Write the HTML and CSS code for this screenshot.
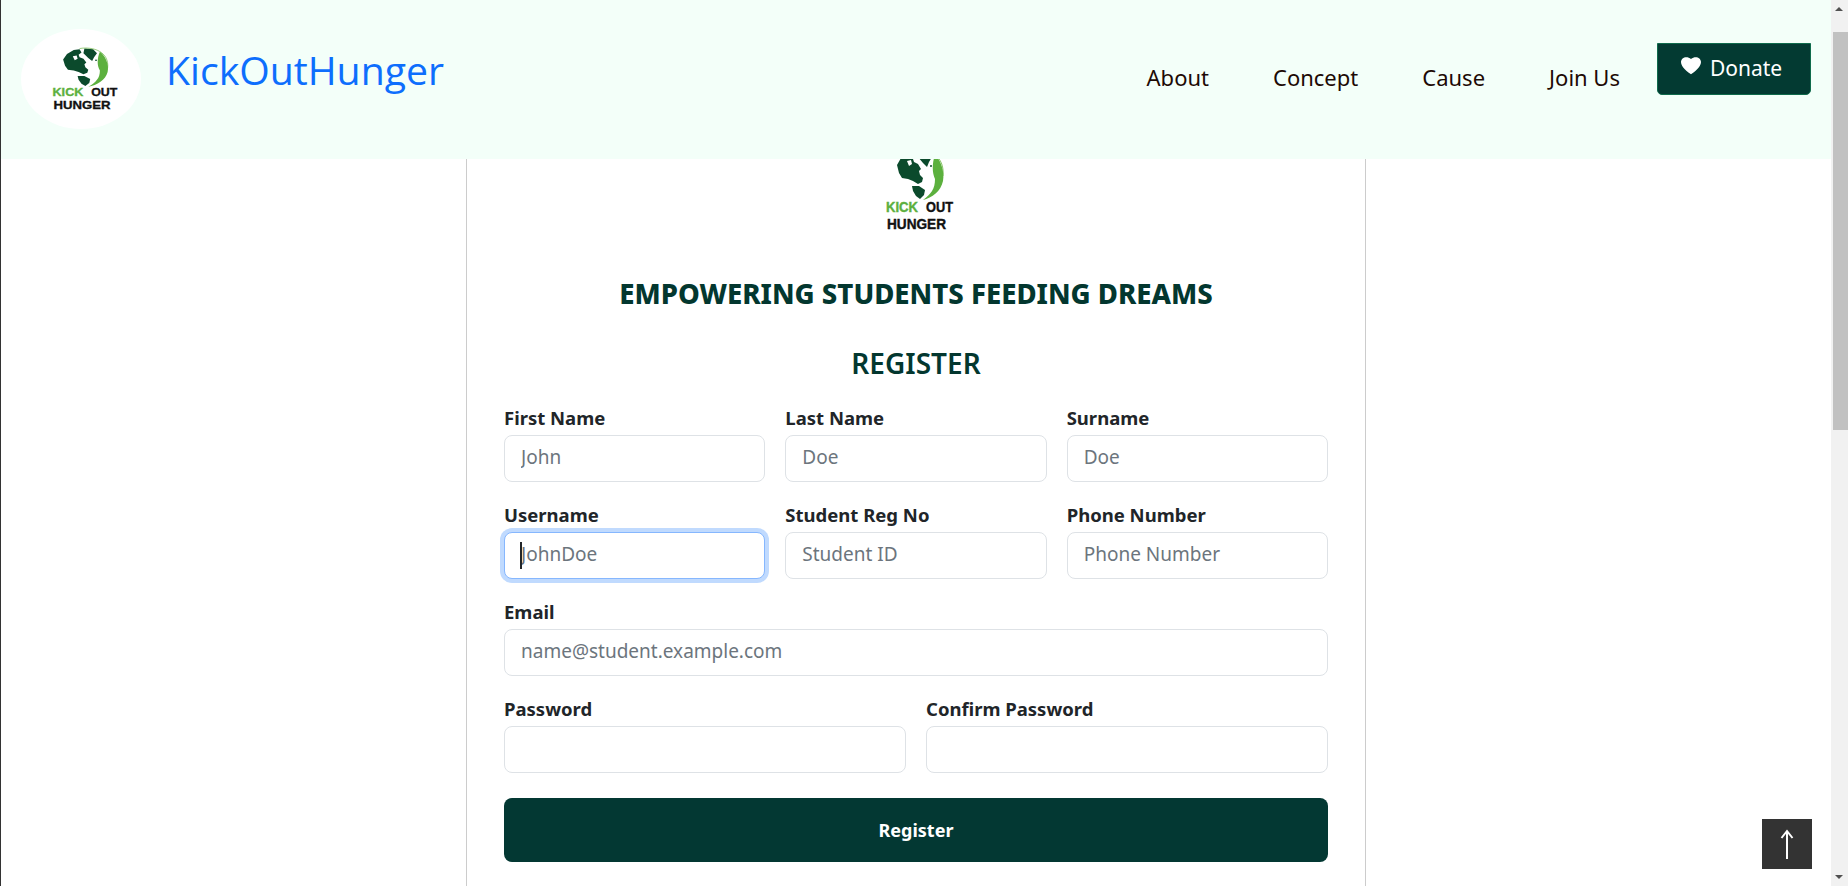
FILE: index.html
```html
<!DOCTYPE html>
<html lang="en">
<head>
    <meta charset="UTF-8">
    <meta name="viewport" content="width=device-width, initial-scale=1.0">
    <title>KickOutHunger - Register</title>
    <link rel="stylesheet" href="styles.css">
</head>
<body>
    <svg class="defs" width="0" height="0">
        <defs>
            <g id="globe">
                <path fill="#0b4a2c" d="M11 16 L15 9 L22 4 L28 3 L30 7 L27 10 L28 13 L32 15 L35 20 L33 22 L34 26 L37 29 L36 33 L32 35 L27 32 L22 30 L16 29 L13 24 Z"/>
                <path fill="#fff" d="M21 12 L25 11 L26 15 L23 17 Z"/>
                <path fill="#0b4a2c" d="M26 37 L33 37 L39 41 L38 46 L34 50 L30 47 L27 42 Z"/>
                <path fill="#0b4a2c" d="M33 2 L42 3 L46 8 L43 13 L41 18 L37 14 L32 8 Z"/>
                <circle fill="#0b4a2c" cx="45" cy="17" r="1"/>
                <path fill="none" stroke="#6bb544" stroke-width="0.8" d="M28 2 C42 -1 59 6 57 27"/>
                <path fill="#5cb03e" d="M49 6 C54 10 59 22 57 32 C55 42 46 49 37 51 C45 45 49 40 49 30 C46 24 46 14 49 6 Z"/>
            </g>
        </defs>
    </svg>

    <div class="page">
        <header class="navbar">
            <div class="brand">
                <div class="brand-logo">
                    <svg width="89" height="64" viewBox="-16 0 92 82" preserveAspectRatio="none">
                        <use href="#globe"/>
                        <text class="logo-text kick" x="0" y="63" textLength="32" lengthAdjust="spacingAndGlyphs">KICK</text>
                        <text class="logo-text" x="40" y="63" textLength="27" lengthAdjust="spacingAndGlyphs">OUT</text>
                        <text class="logo-text" x="1" y="80" textLength="59" lengthAdjust="spacingAndGlyphs">HUNGER</text>
                    </svg>
                </div>
                <a class="brand-name" href="#">KickOutHunger</a>
            </div>
            <nav class="nav-links">
                <a href="#">About</a>
                <a href="#">Concept</a>
                <a href="#">Cause</a>
                <a href="#">Join Us</a>
                <button class="donate-btn" type="button">
                    <svg width="22" height="20" viewBox="0 0 16 15"><path fill="#fff" d="M8 14.5 C-6 5.5 3-1.5 8 3 C13-1.5 22 5.5 8 14.5 Z"/></svg>
                    Donate
                </button>
            </nav>
        </header>

        <main class="card">
            <svg class="card-logo" width="92" height="82" viewBox="-16 0 92 82">
                <use href="#globe"/>
                <text class="logo-text kick" x="0" y="63" textLength="32" lengthAdjust="spacingAndGlyphs">KICK</text>
                <text class="logo-text" x="40" y="63" textLength="27" lengthAdjust="spacingAndGlyphs">OUT</text>
                <text class="logo-text" x="1" y="80" textLength="59" lengthAdjust="spacingAndGlyphs">HUNGER</text>
            </svg>
            <h2 class="slogan">EMPOWERING STUDENTS FEEDING DREAMS</h2>
            <h3 class="form-title">REGISTER</h3>

            <form onsubmit="return false;">
                <div class="form-row">
                    <div class="form-group">
                        <label for="first-name">First Name</label>
                        <input type="text" id="first-name" placeholder="John">
                    </div>
                    <div class="form-group">
                        <label for="last-name">Last Name</label>
                        <input type="text" id="last-name" placeholder="Doe">
                    </div>
                    <div class="form-group">
                        <label for="surname">Surname</label>
                        <input type="text" id="surname" placeholder="Doe">
                    </div>
                </div>
                <div class="form-row">
                    <div class="form-group">
                        <label for="username">Username</label>
                        <div class="input-wrap">
                            <input class="focused" type="text" id="username" placeholder="JohnDoe">
                            <span class="caret"></span>
                        </div>
                    </div>
                    <div class="form-group">
                        <label for="student-id">Student Reg No</label>
                        <input type="text" id="student-id" placeholder="Student ID">
                    </div>
                    <div class="form-group">
                        <label for="phone">Phone Number</label>
                        <input type="text" id="phone" placeholder="Phone Number">
                    </div>
                </div>
                <div class="form-row">
                    <div class="form-group">
                        <label for="email">Email</label>
                        <input type="text" id="email" placeholder="name@student.example.com">
                    </div>
                </div>
                <div class="form-row">
                    <div class="form-group">
                        <label for="password">Password</label>
                        <input type="password" id="password">
                    </div>
                    <div class="form-group">
                        <label for="confirm">Confirm Password</label>
                        <input type="password" id="confirm">
                    </div>
                </div>
                <button class="submit-btn" type="button">Register</button>
            </form>
        </main>

        <a class="to-top" href="#">
            <svg width="14" height="30" viewBox="0 0 14 30"><path fill="none" stroke="#fff" stroke-width="2" d="M7 30 V3 M1.5 9 L7 2 L12.5 9"/></svg>
        </a>
    </div>

    <div class="scrollbar">
        <span class="arrow-up"></span>
        <span class="thumb"></span>
        <span class="arrow-down"></span>
    </div>
</body>
</html>
```

FILE: styles.css
```css
html, body {
    height: 100%;
}

body {
    margin: 0;
    padding: 0;
    display: flex;
    overflow: hidden;
    background-color: #fff;
    border-left: 1px solid #333;
    font-family: "Noto Sans", Arial, sans-serif;
    color: #212529;
}

.defs {
    position: absolute;
}

.logo-text {
    font-family: "Liberation Sans", Arial, sans-serif;
    font-size: 14.5px;
    font-weight: bold;
    fill: #111;
    stroke: #111;
    stroke-width: 0.4px;
}

.logo-text.kick {
    fill: #5cb03e;
    stroke: #5cb03e;
}

.page {
    flex: 1;
    min-width: 0;
    position: relative;
    overflow: hidden;
}

.navbar {
    position: relative;
    z-index: 2;
    height: 159px;
    box-sizing: border-box;
    display: flex;
    justify-content: space-between;
    background-color: #f3fff9;
    padding: 0 20px;
}

.brand {
    display: flex;
    gap: 25px;
}

.brand-logo {
    width: 120px;
    height: 100px;
    margin-top: 29px;
    border-radius: 50%;
    background-color: #fff;
    display: flex;
    align-items: center;
    justify-content: center;
}

.brand-name {
    margin-top: 43px;
    font-family: "Open Sans", sans-serif;
    font-size: 39.2px;
    line-height: 54px;
    color: #0d6efd;
    text-decoration: none;
}

.nav-links {
    display: flex;
    align-items: flex-start;
    gap: 64px;
}

.nav-links a {
    margin-top: 61px;
    font-size: 22px;
    line-height: 32px;
    color: #1d0a05;
    text-decoration: none;
}

.donate-btn {
    margin: 43px 0 0 -27px;
    width: 154px;
    height: 52px;
    display: flex;
    align-items: center;
    justify-content: center;
    gap: 8px;
    padding: 0 6px 2px 0;
    background-color: #033a32;
    border: 1px solid #0f6b4c;
    border-radius: 0 0 5px 5px;
    color: #fff;
    font-family: "Noto Sans", Arial, sans-serif;
    font-size: 21px;
}

.donate-btn svg {
    margin-top: -6px;
}

.card {
    width: 900px;
    height: 800px;
    box-sizing: border-box;
    margin: -10px auto 0;
    padding: 0 37px;
    background-color: #fff;
    border: 1px solid #ccc;
    border-width: 0 1px;
}

.card-logo {
    display: block;
    margin: 0 auto;
}

.slogan {
    margin: 45px 0 0;
    text-align: center;
    font-size: 27.5px;
    line-height: 36px;
    font-weight: 800;
    color: #03372f;
}

.form-title {
    margin: 32px 0 0;
    text-align: center;
    font-size: 28px;
    line-height: 38px;
    font-weight: 600;
    color: #03372f;
}

form {
    margin-top: 23px;
}

.form-row {
    display: flex;
    gap: 20px;
    margin-bottom: 20px;
}

.form-group {
    flex: 1;
    min-width: 0;
}

label {
    display: block;
    height: 30px;
    font-size: 18.5px;
    line-height: 26px;
    font-weight: 700;
}

input {
    display: block;
    width: 100%;
    height: 47px;
    box-sizing: border-box;
    padding: 0 16px 4px;
    border: 1px solid #dee2e6;
    border-radius: 8px;
    font-family: "Noto Sans", Arial, sans-serif;
    font-size: 19px;
    outline: none;
}

input::placeholder {
    color: #6c757d;
}

input.focused {
    border-color: #86b7fe;
    box-shadow: 0 0 0 4px #c0dafe;
}

.input-wrap {
    position: relative;
}

.caret {
    position: absolute;
    left: 16px;
    top: 10px;
    width: 2px;
    height: 27px;
    background-color: #212529;
}

.submit-btn {
    display: block;
    width: 100%;
    height: 64px;
    margin-top: 25px;
    background-color: #033833;
    border: none;
    border-radius: 8px;
    color: #fff;
    font-family: "Noto Sans", Arial, sans-serif;
    font-size: 18px;
    font-weight: 700;
}

.to-top {
    position: absolute;
    right: 19px;
    bottom: 17px;
    width: 50px;
    height: 50px;
    display: flex;
    align-items: center;
    justify-content: center;
    background-color: #333;
}

.scrollbar {
    width: 17px;
    flex-shrink: 0;
    position: relative;
    background-color: #f1f1f1;
}

.thumb {
    position: absolute;
    top: 32px;
    left: 2px;
    width: 15px;
    height: 398px;
    background-color: #c1c1c1;
}

.arrow-up, .arrow-down {
    position: absolute;
    left: 4px;
    width: 0;
    height: 0;
    border-left: 4px solid transparent;
    border-right: 4px solid transparent;
}

.arrow-up {
    top: 7px;
    border-bottom: 4px solid #505050;
}

.arrow-down {
    bottom: 7px;
    border-top: 4px solid #505050;
}
```
